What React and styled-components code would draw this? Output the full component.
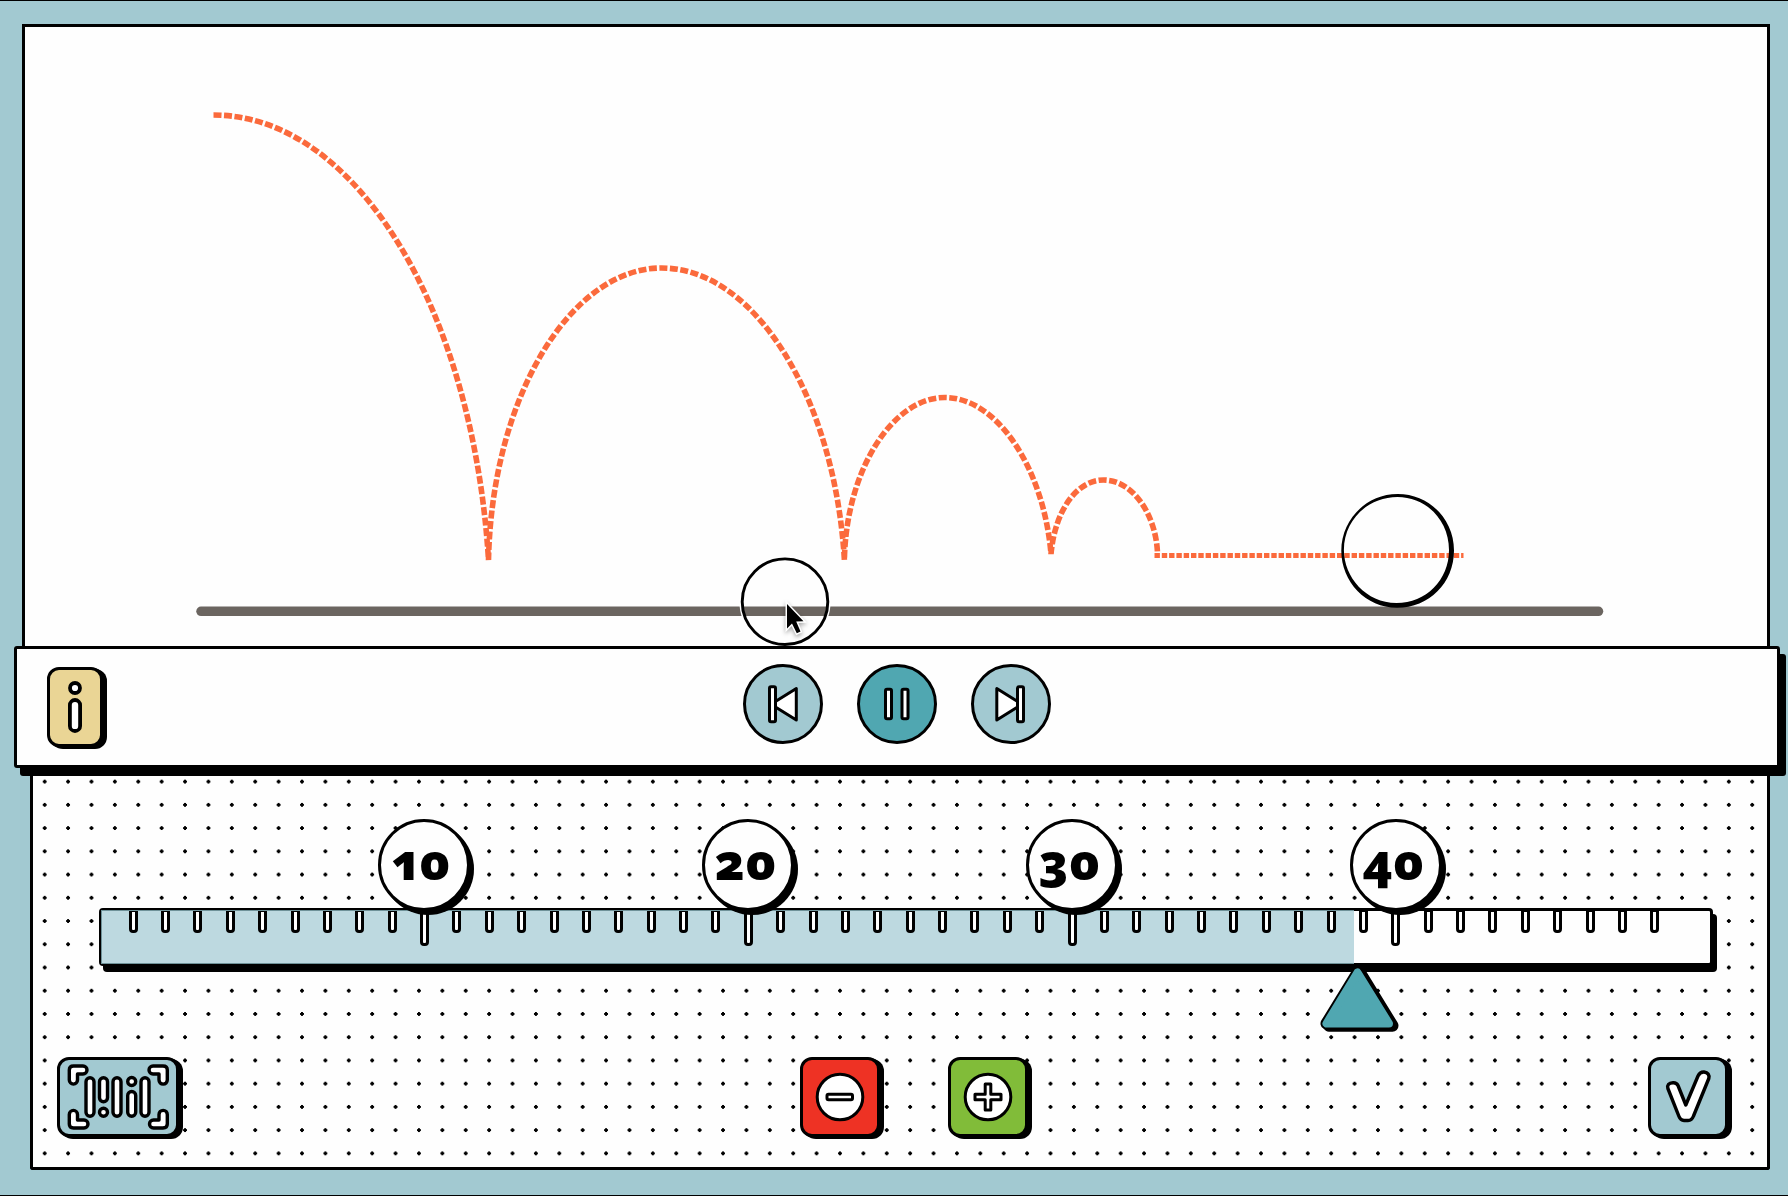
import React, { useState } from "react";
import styled, { createGlobalStyle } from "styled-components";

const color = {
  sky: "#a2c9d1",
  teal: "#50a7b1",
  fill: "#bdd9e0",
  sand: "#ead595",
  red: "#ee3224",
  green: "#81bc39",
  orange: "#fb6a3c",
  ground: "#6b6560",
  paper: "#fefefe",
  ink: "#000000",
};

const TOTAL = 49;
const TICKS = 48;

const GlobalStyle = createGlobalStyle`
  *, *::before, *::after { box-sizing: border-box; }
  html, body, #root { height: 100%; }
  body {
    margin: 0;
    background: ${color.sky};
    color: ${color.ink};
    font-family: "Open Sans", "Noto Sans", sans-serif;
  }
`;

const Page = styled.main`
  min-height: 100%;
  display: flex;
  flex-direction: column;
  padding: 23px 8px 25px 14px;
  background: ${color.sky};
  border-top: 1px solid ${color.ink};
  border-bottom: 1px solid ${color.ink};
`;

const Stage = styled.section`
  margin: 0 10px 0 8px;
  background: ${color.paper};
  border: 3px solid ${color.ink};
  border-bottom: 0;
`;

const SceneArt = styled.svg`
  display: block;
  width: 100%;
  height: auto;
  overflow: visible;
`;

const ControlBar = styled.section`
  position: relative;
  z-index: 1;
  display: grid;
  grid-template-columns: 1fr auto 1fr;
  align-items: center;
  min-height: 122px;
  padding: 0 30px;
  background: ${color.paper};
  border: 3px solid ${color.ink};
  border-radius: 3px;
  box-shadow: 6px 8px 0 ${color.ink};
`;

const Transport = styled.div`
  display: flex;
  gap: 34px;
  padding-bottom: 6px;
`;

const RoundButton = styled.button`
  width: 80px;
  height: 80px;
  padding: 0;
  border: 3px solid ${color.ink};
  border-radius: 50%;
  background: ${(p) => p.$tone};
  cursor: pointer;
`;

const KeyButton = styled.button`
  width: ${(p) => p.$width || 80}px;
  height: 80px;
  padding: 0;
  border: 3px solid ${color.ink};
  border-radius: 12px;
  background: ${(p) => p.$tone};
  box-shadow: 4px 2px 0 ${color.ink}, 2px 1px 0 ${color.ink};
  cursor: pointer;
`;

const Icon = styled.svg`
  display: block;
  margin: -3px;
  overflow: visible;
  stroke: ${color.ink};
  stroke-linejoin: round;
  stroke-linecap: round;
  fill: #fff;
`;

const Board = styled.section`
  flex: 1;
  display: grid;
  margin: 0 10px 0 16px;
  background: ${color.paper};
  border: 3px solid ${color.ink};
  border-top: 0;
  border-radius: 0 0 3px 3px;
`;

const DotGrid = styled.div`
  grid-area: 1 / 1;
  margin: 2px 3px 2px 0;
  background-image: radial-gradient(circle, ${color.ink} 2px, transparent 2px);
  background-size: calc(100% / 74) calc(100% / 17);
`;

const BoardContent = styled.div`
  grid-area: 1 / 1;
  display: flex;
  flex-direction: column;
  justify-content: space-between;
  padding: 51px 39px 30px 24px;
`;

const RulerBlock = styled.div`
  margin: 0 15px 0 42px;
`;

const scaleColumns = `
  display: grid;
  grid-template-columns: repeat(${TICKS}, minmax(0, 1fr));
  margin: 0;
  list-style: none;
`;

const MarkRow = styled.ol`
  ${scaleColumns}
  position: relative;
  z-index: 1;
  margin-bottom: -3px;
  padding: 0 42px 0 17px;
`;

const Mark = styled.li`
  grid-column: ${(p) => p.$at};
  justify-self: center;
  display: grid;
  place-items: center;
  width: 92px;
  height: 92px;
  padding: 0 4px 8px 0;
  border: 3px solid ${color.ink};
  border-radius: 50%;
  background: ${color.paper};
  box-shadow: 4px 4px 0 ${color.ink}, 2px 2px 0 ${color.ink};
  font-size: 50px;
  font-weight: 800;
  line-height: 60px;
  font-variant-numeric: oldstyle-nums proportional-nums;
`;

const Ruler = styled.div`
  display: grid;
  height: 58px;
  border: 3px solid ${color.ink};
  border-radius: 4px;
  background: ${color.paper};
  box-shadow: 4px 6px 0 ${color.ink};
`;

const RulerFill = styled.div`
  grid-area: 1 / 1;
  margin: -1px 0 -1px -1px;
  background: ${color.fill};
  border: 1px solid #6f9299;
  border-right: 0;
`;

const TickRow = styled.ol`
  ${scaleColumns}
  grid-area: 1 / 1;
  padding: 0 39px 0 15px;
`;

const Tick = styled.li`
  justify-self: center;
  width: 9px;
  height: ${(p) => (p.$major ? 35 : 22)}px;
  border: 3px solid ${color.ink};
  border-top-width: 1px;
  border-radius: 0 0 4px 4px;
  background: #fff;
`;

const Slider = styled.div`
  display: grid;
  height: 68px;
`;

const Range = styled.input`
  grid-area: 1 / 1;
  width: 100%;
  height: 68px;
  margin: 0;
  opacity: 0;
  cursor: pointer;
`;

const Thumb = styled.svg`
  grid-area: 1 / 1;
  width: 80px;
  height: 68px;
  overflow: visible;
  pointer-events: none;
`;

const Actions = styled.div`
  display: flex;
  justify-content: space-between;
`;

const ActionGroup = styled.div`
  display: flex;
  gap: 68px;
`;

function Scene() {
  return (
    <SceneArt viewBox="25 27 1742 619" role="img" aria-label="Path of a bouncing ball">
      <g fill="none" stroke={color.orange} strokeWidth="5.6">
        <path
          strokeDasharray="8 2.5"
          d="M213.5 115C356 115 473 310 488.5 560C492 395 572 268 661.5 268C756 268 835 400 844.4 560C846 470 893 397.5 944.7 397.5C998 397.5 1044 470 1051 554C1055 510 1077 480 1103.5 480C1133 480 1156 515 1157.5 553"
        />
        <path strokeDasharray="5.4 1.9" strokeWidth="5" d="M1154.5 555.5H1463.5" />
      </g>
      <path d="M201 611.3H1598.5" stroke={color.ground} strokeWidth="9.5" strokeLinecap="round" />
      <path
        fillRule="evenodd"
        d="M1341.3 550.8C1341.3 520 1366 494 1397.7 494C1429 494 1454 519 1454 550.5C1454 583 1429 607.8 1397 607.8C1366 607.8 1341.3 582 1341.3 550.8ZM1343.9 550C1343.9 577 1366 603 1396.5 603C1426 603 1449 580 1449 550C1449 520 1426 497 1397.5 497C1368 497 1343.9 520 1343.9 550Z"
      />
      <g fill="none">
        <circle cx="785" cy="601.7" r="44.6" stroke="#ffffff" strokeWidth="2" />
        <circle cx="785" cy="601.7" r="42.8" stroke={color.ink} strokeWidth="2.9" />
      </g>
      <path
        d="M787 604L787 628.5L792 623.4L796.8 633.3L800.5 631.5L796.2 621.5L803.5 621.3Z"
        stroke="#ffffff"
        strokeWidth="3"
        paintOrder="stroke"
        filter="drop-shadow(0 2px 2px rgba(0,0,0,.35))"
      />
    </SceneArt>
  );
}

function InfoIcon() {
  return (
    <Icon width="56" height="80" viewBox="0 0 56 80" strokeWidth="3.8">
      <circle cx="28" cy="21" r="5" />
      <rect x="22.9" y="33" width="10.2" height="31" rx="5.1" />
    </Icon>
  );
}

function PreviousIcon() {
  return (
    <Icon width="80" height="80" viewBox="0 0 80 80" strokeWidth="3">
      <path d="M28 40.2L53.3 24.5V56Z" />
      <rect x="26.5" y="22.8" width="6" height="35" rx="1.5" />
    </Icon>
  );
}

function PauseIcon() {
  return (
    <Icon width="80" height="80" viewBox="0 0 80 80" strokeWidth="3">
      <rect x="28.5" y="25.3" width="6" height="29.5" rx="1.5" />
      <rect x="45" y="25.3" width="6" height="29.5" rx="1.5" />
    </Icon>
  );
}

function NextIcon() {
  return (
    <Icon width="80" height="80" viewBox="0 0 80 80" strokeWidth="3">
      <path d="M51 40.2L25.8 24.5V56Z" />
      <rect x="46.5" y="22.8" width="6" height="35" rx="1.5" />
    </Icon>
  );
}

function BarcodeIcon() {
  return (
    <Icon width="122" height="80" viewBox="0 0 122 80" strokeWidth="3.4">
      <path d="M16.5 9H26A4 4 0 0 1 26 17H20.5V23A4 4 0 0 1 12.3 23V13Q12.3 9 16.5 9Z" />
      <path d="M106 9H96A4 4 0 0 0 96 17H102V23A4 4 0 0 0 110.3 23V13Q110.3 9 106 9Z" />
      <path d="M16.5 71H27A4 4 0 0 0 27 63H20.5V57.5A4 4 0 0 0 12.3 57.5V67Q12.3 71 16.5 71Z" />
      <path d="M106 71H96.5A4 4 0 0 1 96.5 63H102V57.5A4 4 0 0 1 110.3 57.5V67Q110.3 71 106 71Z" />
      <rect x="29" y="20.7" width="8" height="38.6" rx="4" />
      <rect x="42.5" y="20.7" width="8" height="24" rx="4" />
      <circle cx="46.5" cy="55.3" r="4" />
      <rect x="56" y="20.7" width="8" height="38.6" rx="4" />
      <circle cx="74.7" cy="24.5" r="4" />
      <rect x="70.7" y="34.5" width="8" height="24.8" rx="4" />
      <rect x="84" y="20.7" width="8" height="38.6" rx="4" />
    </Icon>
  );
}

function MinusIcon() {
  return (
    <Icon width="80" height="80" viewBox="0 0 80 80" strokeWidth="3">
      <circle cx="40" cy="40" r="22.8" />
      <rect x="27" y="37.2" width="25.5" height="5.6" rx="1.5" />
    </Icon>
  );
}

function PlusIcon() {
  return (
    <Icon width="80" height="80" viewBox="0 0 80 80" strokeWidth="3">
      <circle cx="40" cy="40" r="22.8" />
      <path d="M37.2 27H42.8V37.2H53V42.8H42.8V53H37.2V42.8H27V37.2H37.2Z" />
    </Icon>
  );
}

function CheckIcon() {
  return (
    <Icon width="80" height="80" viewBox="0 0 80 80" strokeWidth="3.4">
      <path d="M19.9 31.5Q18.5 26 25 25.7Q28.5 25.5 30 28.5L37.8 48L50 19Q52 14.8 56 15Q62 16 60.8 21.5L45.5 59Q43.8 63.5 40 63.5H36Q32.5 63.5 31 59.5Z" />
    </Icon>
  );
}

function Triangle(props) {
  return (
    <Thumb viewBox="0 0 80 68" aria-hidden="true" {...props}>
      <g strokeLinejoin="round">
        <path d="M41 8.5L9 59.7H72.5Z" fill={color.ink} stroke={color.ink} strokeWidth="12" />
        <path d="M37.5 7L6.5 57.5H69Z" fill={color.ink} stroke={color.ink} strokeWidth="12" />
        <path d="M37.5 6.5L6.5 57.5H69Z" fill={color.teal} stroke={color.teal} strokeWidth="8" />
      </g>
    </Thumb>
  );
}

const marks = [10, 20, 30, 40];

export default function App() {
  const [value, setValue] = useState(38.8);
  const share = `${(value / 38.8) * 77.95}%`;
  const step = (by) => setValue((v) => Math.min(TOTAL, Math.max(0, v + by)));

  return (
    <>
      <GlobalStyle />
      <Page>
        <Stage>
          <Scene />
        </Stage>
        <ControlBar>
          <KeyButton $width={56} $tone={color.sand} aria-label="Information">
            <InfoIcon />
          </KeyButton>
          <Transport>
            <RoundButton $tone={color.sky} aria-label="Previous">
              <PreviousIcon />
            </RoundButton>
            <RoundButton $tone={color.teal} aria-label="Pause">
              <PauseIcon />
            </RoundButton>
            <RoundButton $tone={color.sky} aria-label="Next">
              <NextIcon />
            </RoundButton>
          </Transport>
        </ControlBar>
        <Board>
          <DotGrid />
          <BoardContent>
            <RulerBlock>
              <MarkRow>
                {marks.map((at) => (
                  <Mark key={at} $at={at}>
                    {at}
                  </Mark>
                ))}
              </MarkRow>
              <Ruler>
                <RulerFill style={{ width: share }} />
                <TickRow aria-hidden="true">
                  {Array.from({ length: TICKS }, (_, i) => (
                    <Tick key={i} $major={(i + 1) % 10 === 0} />
                  ))}
                </TickRow>
              </Ruler>
              <Slider>
                <Range
                  type="range"
                  aria-label="Position in time"
                  min="0"
                  max={TOTAL}
                  step="0.1"
                  value={value}
                  onChange={(e) => setValue(Number(e.target.value))}
                />
                <Triangle style={{ marginLeft: `calc(${share} - 37px)` }} />
              </Slider>
            </RulerBlock>
            <Actions>
              <KeyButton $width={122} $tone={color.sky} aria-label="Scan code">
                <BarcodeIcon />
              </KeyButton>
              <ActionGroup>
                <KeyButton $tone={color.red} aria-label="Less" onClick={() => step(-1)}>
                  <MinusIcon />
                </KeyButton>
                <KeyButton $tone={color.green} aria-label="More" onClick={() => step(1)}>
                  <PlusIcon />
                </KeyButton>
              </ActionGroup>
              <KeyButton $tone={color.sky} aria-label="Confirm">
                <CheckIcon />
              </KeyButton>
            </Actions>
          </BoardContent>
        </Board>
      </Page>
    </>
  );
}
